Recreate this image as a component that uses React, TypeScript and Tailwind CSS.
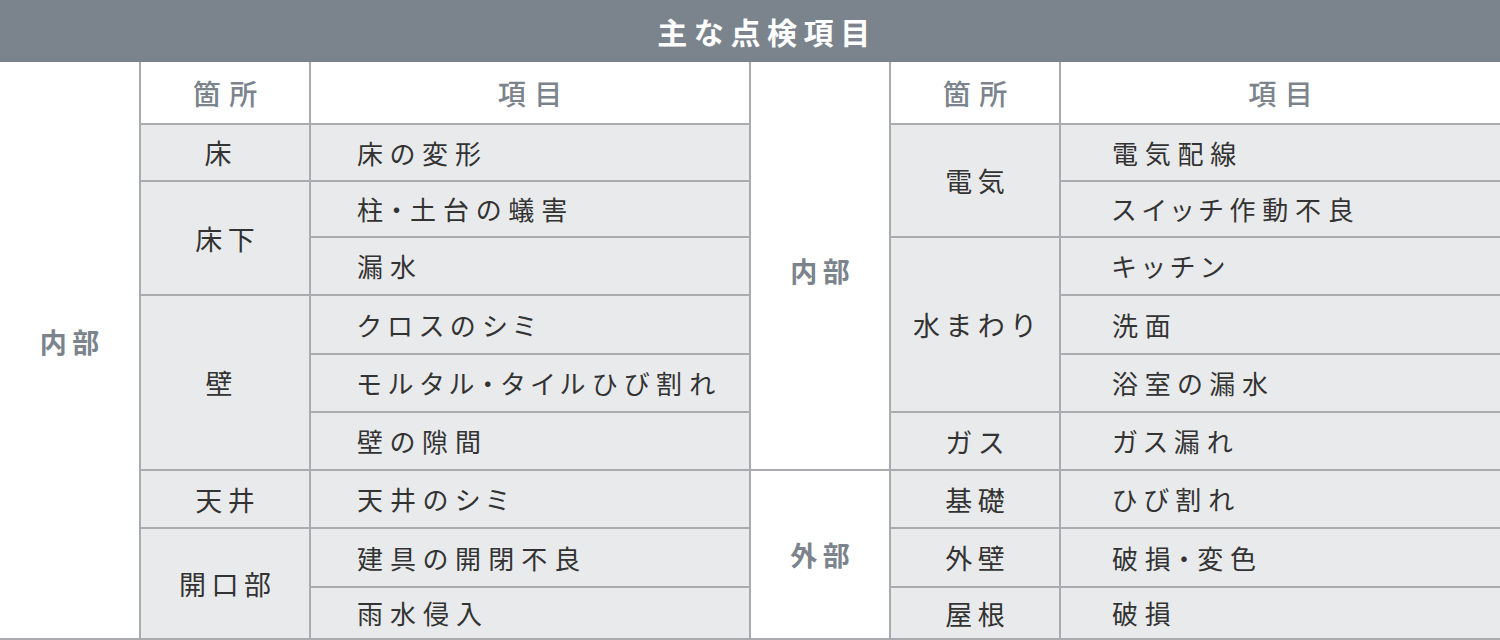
import React from "react";

const font = { fontFamily: '"Noto Sans CJK JP", "Noto Sans", sans-serif' };

type C = { text: string; cls: string; kind: "label" | "head" | "place" | "item" | "item2" };

const cells: C[] = [
  { text: "内部", cls: "col-start-1 row-start-1 row-span-10 pb-[18px]", kind: "label" },
  { text: "箇所", cls: "col-start-2 row-start-1", kind: "head" },
  { text: "項目", cls: "col-start-3 row-start-1", kind: "head" },
  { text: "内部", cls: "col-start-4 row-start-1 row-span-7 pt-[10px]", kind: "label" },
  { text: "箇所", cls: "col-start-5 row-start-1", kind: "head" },
  { text: "項目", cls: "col-start-6 row-start-1", kind: "head" },

  { text: "床", cls: "col-start-2 row-start-2 pr-[14px]", kind: "place" },
  { text: "床下", cls: "col-start-2 row-start-3 row-span-2", kind: "place" },
  { text: "壁", cls: "col-start-2 row-start-5 row-span-3 pr-[12px]", kind: "place" },
  { text: "天井", cls: "col-start-2 row-start-8", kind: "place" },
  { text: "開口部", cls: "col-start-2 row-start-9 row-span-2", kind: "place" },

  { text: "床の変形", cls: "col-start-3 row-start-2", kind: "item" },
  { text: "柱・土台の蟻害", cls: "col-start-3 row-start-3", kind: "item" },
  { text: "漏水", cls: "col-start-3 row-start-4", kind: "item" },
  { text: "クロスのシミ", cls: "col-start-3 row-start-5", kind: "item" },
  { text: "モルタル・タイルひび割れ", cls: "col-start-3 row-start-6", kind: "item" },
  { text: "壁の隙間", cls: "col-start-3 row-start-7", kind: "item" },
  { text: "天井のシミ", cls: "col-start-3 row-start-8", kind: "item" },
  { text: "建具の開閉不良", cls: "col-start-3 row-start-9", kind: "item" },
  { text: "雨水侵入", cls: "col-start-3 row-start-10", kind: "item" },

  { text: "外部", cls: "col-start-4 row-start-8 row-span-3", kind: "label" },

  { text: "電気", cls: "col-start-5 row-start-2 row-span-2", kind: "place" },
  { text: "水まわり", cls: "col-start-5 row-start-4 row-span-3", kind: "place" },
  { text: "ガス", cls: "col-start-5 row-start-7", kind: "place" },
  { text: "基礎", cls: "col-start-5 row-start-8", kind: "place" },
  { text: "外壁", cls: "col-start-5 row-start-9", kind: "place" },
  { text: "屋根", cls: "col-start-5 row-start-10", kind: "place" },

  { text: "電気配線", cls: "col-start-6 row-start-2", kind: "item2" },
  { text: "スイッチ作動不良", cls: "col-start-6 row-start-3", kind: "item2" },
  { text: "キッチン", cls: "col-start-6 row-start-4", kind: "item2" },
  { text: "洗面", cls: "col-start-6 row-start-5", kind: "item2" },
  { text: "浴室の漏水", cls: "col-start-6 row-start-6", kind: "item2" },
  { text: "ガス漏れ", cls: "col-start-6 row-start-7", kind: "item2" },
  { text: "ひび割れ", cls: "col-start-6 row-start-8", kind: "item2" },
  { text: "破損・変色", cls: "col-start-6 row-start-9", kind: "item2" },
  { text: "破損", cls: "col-start-6 row-start-10", kind: "item2" },
];

const kindCls: Record<C["kind"], string> = {
  label:
    "bg-white flex items-center justify-center text-[27px] font-bold text-[#7b838c] tracking-[0.2em] indent-[0.2em]",
  head:
    "bg-white flex items-center justify-center text-[28px] font-medium text-[#7b838c] tracking-[0.3em] indent-[0.3em]",
  place:
    "bg-[#e9eaec] flex items-center justify-center text-[27px] text-[#333333] tracking-[0.2em] indent-[0.2em]",
  item: "bg-[#e9eaec] flex items-center justify-start text-[26px] text-[#333333] tracking-[0.27em] pl-[46px] [font-feature-settings:'palt']",
  item2:
    "bg-[#e9eaec] flex items-center justify-start text-[26px] text-[#333333] tracking-[0.26em] pl-[51px] [font-feature-settings:'palt']",
};

export default function App() {
  return (
    <div className="w-[1500px] h-[640px] bg-white overflow-hidden" style={font}>
      <div className="h-[62px] bg-[#7b838c] flex items-center justify-center text-white text-[30px] font-bold tracking-[0.22em] pl-[34px]">
        主な点検項目
      </div>
      <div className="grid grid-cols-[139px_168px_438px_138px_168px_1fr] grid-rows-[61px_55px_54px_56px_57px_56px_56px_56px_57px_50px] gap-[2px] bg-[#a9abae] pb-[2px]">
        {cells.map((c, i) => (
          <div key={i} className={`${c.cls} ${kindCls[c.kind]} leading-none`}>
            {c.text}
          </div>
        ))}
      </div>
    </div>
  );
}
